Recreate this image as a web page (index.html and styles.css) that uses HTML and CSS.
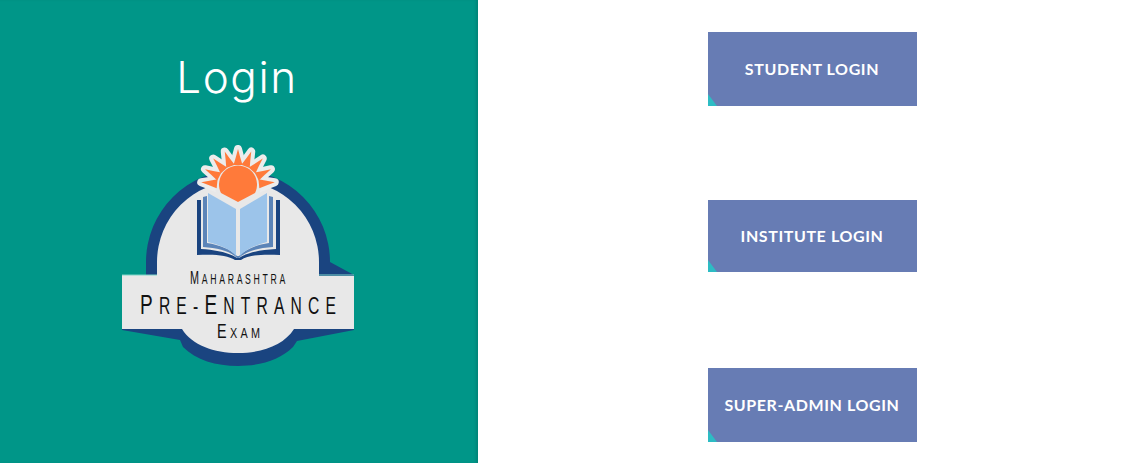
FILE: index.html
```html
<!DOCTYPE html>
<html lang="en">
<head>
<meta charset="utf-8">
<title>Login</title>
<link rel="stylesheet" href="styles.css">
</head>
<body>
<div class="page">
  <aside class="panel">
    <h1 class="title">Login</h1>
    <svg class="logo" viewBox="119 143 238 225" width="238" height="225" role="img" aria-label="Maharashtra Pre-Entrance Exam">
      <defs>
        <path id="ray" d="M233.500 165Q236 157 238 149Q240 157 242.500 165Z"/>
        <g id="ray-set">
          <use href="#ray" transform="rotate(-84 238 186)"/>
          <use href="#ray" transform="rotate(-63 238 186)"/>
          <use href="#ray" transform="rotate(-42 238 186)"/>
          <use href="#ray" transform="rotate(-21 238 186)"/>
          <use href="#ray"/>
          <use href="#ray" transform="rotate(21 238 186)"/>
          <use href="#ray" transform="rotate(42 238 186)"/>
          <use href="#ray" transform="rotate(63 238 186)"/>
          <use href="#ray" transform="rotate(84 238 186)"/>
        </g>
      </defs>
      <path class="blue" d="M146 275V262A92 92 0 0 1 330 262L354 275V330L297 341L293 347C280 360 260 366 238 366C216 366 196 360 183 347L180 340L122 330V275Z"/>
      <path class="grey" d="M157 262A81 81 0 0 1 319 262V276H354V329H294C284 345 262 353 238 353C214 353 192 345 182 329H122V275H157Z"/>
      <path class="teal-line" d="M122 275H157M319 275H354"/>
      <use href="#ray-set" class="rays-outline"/>
      <circle class="grey" cx="238" cy="186" r="23"/>
      <use href="#ray-set" class="rays"/>
      <path class="sun" d="M221 193A19 19 0 1 1 255 193L238 202Z"/>
      <path class="blue" d="M197 200H201V249C215 250 228 252 237 258H239C248 252 261 250 276 249V200H280V255C262 254 248 255 241 260H235C228 255 214 254 197 255Z"/>
      <path class="mid" d="M203 197L207 196V243C220 245 230 249 237 256H239C246 249 256 245 269 243V196L273 197V247C258 248 246 251 239 258H237C230 251 218 248 203 247Z"/>
      <path class="page-l" d="M208 193L236 209V256C230 249 220 245 208 242Z"/>
      <path class="page-l" d="M267 193L240 209V256C246 249 256 245 267 242Z"/>
      <text class="logo-text" transform="translate(190 284) scale(.6 1)" font-size="14.5" letter-spacing="4.5"><tspan font-size="18">M</tspan>AHARASHTRA</text>
      <text class="logo-text" transform="translate(140 314) scale(.68 1)" font-size="23" letter-spacing="9.1"><tspan font-size="28">P</tspan>RE-<tspan font-size="28">E</tspan>NTRANCE</text>
      <text class="logo-text" transform="translate(217 338) scale(.72 1)" font-size="15" letter-spacing="4.6"><tspan font-size="20">E</tspan>XAM</text>
    </svg>
  </aside>
  <main class="actions">
    <a class="btn" href="#">STUDENT LOGIN</a>
    <a class="btn btn-short" href="#">INSTITUTE LOGIN</a>
    <a class="btn" href="#">SUPER-ADMIN LOGIN</a>
  </main>
</div>
</body>
</html>
```
FILE: styles.css
```css
html, body {
  margin: 0;
  height: 100%;
  background: #fff;
  overflow: hidden;
}
.page {
  display: flex;
  height: 463px;
}
.panel {
  width: 478px;
  flex: none;
  box-sizing: border-box;
  background: #009688;
  box-shadow: inset -3px 0 3px -1px rgba(0, 0, 0, .12);
  display: flex;
  flex-direction: column;
  align-items: center;
  padding-right: 2px;
}
.title {
  margin: 51px 2px 0 0;
  height: 92px;
  font: 350 44px/52px Inter, "Open Sans", sans-serif;
  letter-spacing: 1.6px;
  color: #fff;
}
.logo {
  display: block;
}
.blue { fill: #1a4480; }
.grey { fill: #e8e8e8; }
.teal-line { stroke: #7fd6c8; stroke-width: 1; fill: none; }
.mid { fill: #5b84b8; }
.page-l { fill: #9cc4ea; }
.sun { fill: #ff7a3a; }
.rays { fill: #ff7a3a; }
.rays-outline { fill: #ececec; stroke: #ececec; stroke-width: 8; stroke-linejoin: round; }
.logo-text {
  font-family: "Liberation Sans", sans-serif;
  fill: #111;
}
.actions {
  flex: 1;
  display: grid;
  grid-template-rows: repeat(3, 168px);
  justify-items: center;
  align-content: start;
  padding: 32px 0 0 2px;
}
.btn {
  position: relative;
  box-sizing: border-box;
  width: 209px;
  height: 74px;
  padding-right: 1px;
  display: flex;
  align-items: center;
  justify-content: center;
  background: #677cb4;
  color: #fff;
  font: 700 16px/1 Lato, "Open Sans", sans-serif;
  letter-spacing: .6px;
  text-decoration: none;
}
.btn-short { height: 72px; }
.btn::before {
  content: "";
  position: absolute;
  left: 0;
  bottom: 0;
  width: 9px;
  height: 12px;
  background: #2dbcc4;
  clip-path: polygon(0 0, 100% 100%, 0 100%);
}
```
